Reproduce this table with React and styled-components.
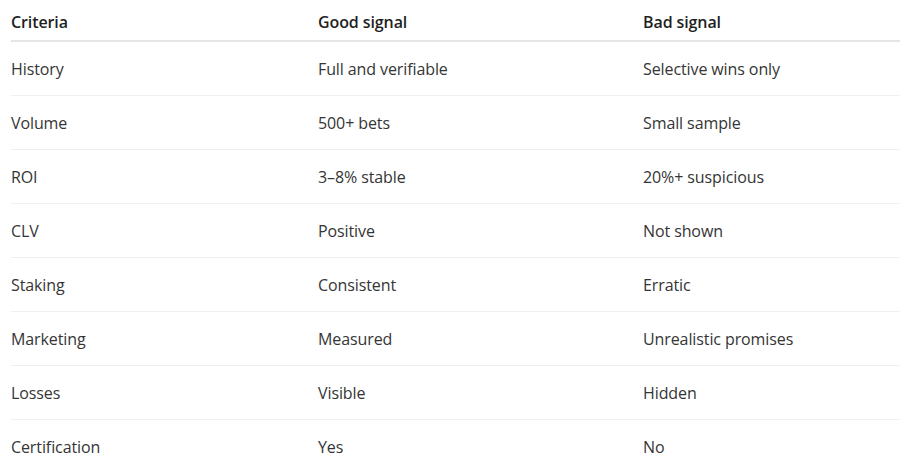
import styled, { createGlobalStyle } from "styled-components";

const GlobalStyle = createGlobalStyle`
  body {
    margin: 0;
    background: #ffffff;
    font-family: "Open Sans", "Noto Sans", sans-serif;
  }
`;

const Wrapper = styled.div`
  width: 900px;
  height: 472px;
  overflow: hidden;
  padding-left: 11px;
  box-sizing: border-box;
`;

const Row = styled.div`
  display: grid;
  grid-template-columns: 307px 325px 1fr;
  align-items: center;
  height: ${(p) => (p.head ? "40px" : "53px")};
  border-bottom: ${(p) => (p.head ? "2px solid #e5e5e5" : "1px solid #f0f0f0")};
`;

const Cell = styled.div`
  font-size: 16px;
  letter-spacing: -0.1px;
  padding-top: ${(p) => (p.head ? "3px" : "1px")};
  color: ${(p) => (p.head ? "#1f1f1f" : "#353535")};
  font-weight: ${(p) => (p.head ? 600 : 400)};
  white-space: nowrap;
`;

const rows = [
  ["History", "Full and verifiable", "Selective wins only"],
  ["Volume", "500+ bets", "Small sample"],
  ["ROI", "3–8% stable", "20%+ suspicious"],
  ["CLV", "Positive", "Not shown"],
  ["Staking", "Consistent", "Erratic"],
  ["Marketing", "Measured", "Unrealistic promises"],
  ["Losses", "Visible", "Hidden"],
  ["Certification", "Yes", "No"],
];

const App = () => {
  return (
    <>
      <GlobalStyle />
      <Wrapper>
        <Row head>
          <Cell head>Criteria</Cell>
          <Cell head>Good signal</Cell>
          <Cell head>Bad signal</Cell>
        </Row>
        {rows.map((r) => (
          <Row key={r[0]}>
            {r.map((c) => (
              <Cell key={c}>{c}</Cell>
            ))}
          </Row>
        ))}
      </Wrapper>
    </>
  );
};

export default App;
